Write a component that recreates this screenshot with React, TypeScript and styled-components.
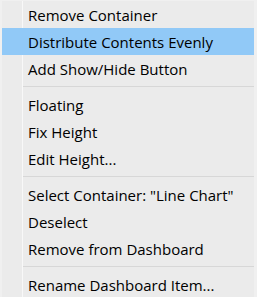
import React from "react";
import styled, { createGlobalStyle } from "styled-components";

const Global = createGlobalStyle`
  html, body { margin: 0; padding: 0; background: #f0f0f0; }
`;

const Menu = styled.div`
  width: 257px;
  height: 297px;
  box-sizing: border-box;
  padding: 1px 3px 0 2px;
  background: #f0f0f0;
  overflow: hidden;
`;

const List = styled.div`
  display: flex;
  flex-direction: column;
  height: 100%;
  background: linear-gradient(
    to right,
    #ebebeb 0 20px,
    #f8f8f8 20px 21px,
    #ebebeb 21px
  );
`;

const Item = styled.div<{ $active?: boolean }>`
  flex: 0 0 27px;
  display: flex;
  align-items: center;
  padding-left: 26px;
  font-family: "Segoe UI", "Open Sans", sans-serif;
  font-size: 15px;
  color: #000;
  white-space: nowrap;
  background: ${(p) => (p.$active ? "#91c9f7" : "transparent")};
`;

const Separator = styled.div`
  flex: 0 0 9px;
  display: flex;
  align-items: flex-start;
  padding: 4px 0 0 21px;
  box-sizing: border-box;
  &::after {
    content: "";
    flex: 1;
    height: 1px;
    background: #d7d7d7;
  }
`;

type Entry = { label: string; active?: boolean } | "sep";

const entries: Entry[] = [
  { label: "Remove Container" },
  { label: "Distribute Contents Evenly", active: true },
  { label: "Add Show/Hide Button" },
  "sep",
  { label: "Floating" },
  { label: "Fix Height" },
  { label: "Edit Height..." },
  "sep",
  { label: 'Select Container: "Line Chart"' },
  { label: "Deselect" },
  { label: "Remove from Dashboard" },
  "sep",
  { label: "Rename Dashboard Item..." },
];

export default function App() {
  return (
    <>
      <Global />
      <Menu>
        <List>
          {entries.map((e, i) =>
            e === "sep" ? (
              <Separator key={i} />
            ) : (
              <Item key={i} $active={e.active}>
                {e.label}
              </Item>
            )
          )}
        </List>
      </Menu>
    </>
  );
}
